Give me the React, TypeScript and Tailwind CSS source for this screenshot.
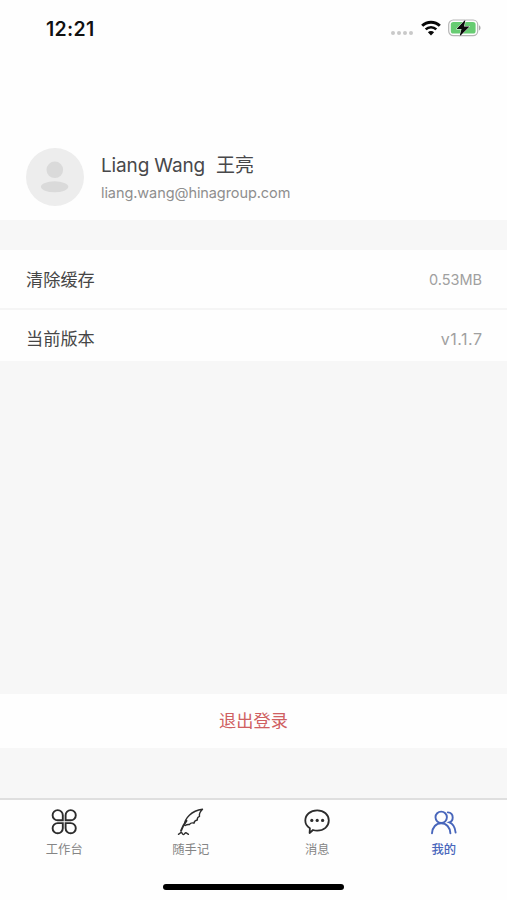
import type { ReactNode } from 'react';
import clsx from 'clsx';

interface SettingRowProps {
  label: string;
  value: string;
  className?: string;
  valueClassName?: string;
}

interface Tab {
  id: string;
  label: string;
  icon: ReactNode;
}

const tabs: Tab[] = [
  { id: 'workbench', label: '工作台', icon: <WorkbenchIcon /> },
  { id: 'notes', label: '随手记', icon: <FeatherIcon /> },
  { id: 'messages', label: '消息', icon: <MessageIcon /> },
  { id: 'mine', label: '我的', icon: <PeopleIcon /> },
];

export default function App() {
  const activeTab = 'mine';

  return (
    <div className="flex h-[900px] w-[507px] flex-col overflow-hidden bg-[#f7f7f7] font-['Inter','Noto_Sans_CJK_SC',sans-serif]">
      {/* Header */}
      <header className="h-[220px] shrink-0 bg-[#fefefe]">
        <StatusBar />
        <div className="mt-[92px] flex items-center pl-[26px]">
          <Avatar />
          <div className="ml-[17px] pt-[2px]">
            <h1 className="flex gap-[11px] text-[19px] leading-[28px] text-[#48484a]">
              <span className="tracking-[-0.15px]">Liang Wang</span>
              <span>王亮</span>
            </h1>
            <p className="text-[14.5px] leading-[25px] tracking-[-0.08px] text-[#8e8e8e]">liang.wang@hinagroup.com</p>
          </div>
        </div>
      </header>

      {/* Settings */}
      <section className="mt-[30px] shrink-0 bg-[#fefefe]">
        <SettingRow label="清除缓存" value="0.53MB" className="h-[60px] border-b-2 border-[#f5f5f5] pt-[2px]" valueClassName="text-[14.5px]" />
        <SettingRow label="当前版本" value="v1.1.7" className="h-[51px] pt-[7px]" valueClassName="text-[16px] tracking-[0.5px] -mr-[0.5px]" />
      </section>

      <button className="mt-[333px] h-[54px] shrink-0 bg-[#fefefe] text-[17.2px] text-[#cf6061]">退出登录</button>

      <nav className="mt-auto h-[102px] shrink-0 border-t-2 border-[#dfdfdf] bg-[#fefefe]">
        <div className="grid grid-cols-4 pt-[8px] pl-[1px]">
          {tabs.map((tab) => (
            <div
              key={tab.id}
              className={clsx(
                'flex flex-col items-center',
                tab.id === activeTab ? 'text-[#4866bb]' : 'text-[#2c2c2c]'
              )}
            >
              {tab.icon}
              <span
                className={clsx(
                  'mt-[5px] text-[12.3px] leading-[18px]',
                  tab.id === activeTab ? 'font-medium' : 'text-[#858585]'
                )}
              >
                {tab.label}
              </span>
            </div>
          ))}
        </div>
        <div className="mx-auto mt-[25px] h-[6px] w-[181px] rounded-full bg-black" />
      </nav>
    </div>
  );
}

function StatusBar() {
  return (
    <div className="flex h-[56px] items-center pr-[26px] pl-[46px]">
      <span className="pt-[3px] text-[19.5px] font-semibold tracking-[0.3px] text-[#111]">12:21</span>
      <div className="ml-auto flex items-center">
        <div className="mt-[10px] flex gap-[2px]">
          <i className="size-[4px] rounded-full bg-[#c9c9c9]" />
          <i className="size-[4px] rounded-full bg-[#c9c9c9]" />
          <i className="size-[4px] rounded-full bg-[#c9c9c9]" />
          <i className="size-[4px] rounded-full bg-[#c9c9c9]" />
        </div>
        <svg className="ml-[8px]" width="20" height="16" viewBox="0 0 20 16" fill="none" stroke="#080808">
          <path d="M1.2 5.8a12.6 12.6 0 0 1 17.6 0" strokeWidth="3" />
          <path d="M4.7 9.4a7.6 7.6 0 0 1 10.6 0" strokeWidth="2.6" />
          <path d="M10 15.4 6.9 12.3a4.4 4.4 0 0 1 6.2 0Z" fill="#080808" stroke="none" />
        </svg>
        <svg className="ml-[7px]" width="33" height="20" viewBox="0 0 33 20">
          <rect x="0.7" y="2" width="29" height="15.6" rx="4.6" fill="#fefefe" stroke="#b5b5b5" strokeWidth="1.2" />
          <rect x="2.8" y="4.1" width="24.8" height="11.4" rx="2.6" fill="#67cc72" />
          <path d="M31 7.2c2 .8 2 4.4 0 5.2Z" fill="#aaa" />
          <path d="M17.500 1.500 8.500 11h5l-2 7.500L21.500 8.600h-5.500Z" fill="#0b0b0b" stroke="#fefefe" strokeWidth="1" paintOrder="stroke" />
        </svg>
      </div>
    </div>
  );
}

function Avatar() {
  return (
    <svg width="58" height="58" viewBox="0 0 58 58">
      <circle cx="29" cy="29" r="29" fill="#ededed" />
      <circle cx="28.8" cy="21.8" r="8.3" fill="#dadada" />
      <ellipse cx="28.6" cy="38.8" rx="13.7" ry="5.5" fill="#dadada" />
    </svg>
  );
}

function SettingRow({ label, value, className, valueClassName }: SettingRowProps) {
  return (
    <div className={clsx('flex items-center justify-between pr-[25px] pl-[26px]', className)}>
      <span className="text-[17.2px] text-[#464646]">{label}</span>
      <span className={clsx('text-[#a0a0a0]', valueClassName)}>{value}</span>
    </div>
  );
}

function WorkbenchIcon() {
  return (
    <svg width="28" height="28" viewBox="0 0 28 28" fill="none" stroke="currentColor" strokeWidth="1.9">
      <path d="M12.8 12.3V7.2a5.1 5.1 0 1 0-5.1 5.1Z" />
      <path d="M15.600 12.300V7.200a5.100 5.100 0 1 1 5.100 5.100Z" />
      <path d="M12.800 15.100v5.100a5.100 5.100 0 1 1-5.100-5.100Z" />
      <path d="M15.600 15.100v5.100a5.100 5.100 0 1 0 5.100-5.100Z" />
    </svg>
  );
}

function FeatherIcon() {
  return (
    <svg width="28" height="28" viewBox="0 0 28 28" fill="none" stroke="currentColor" strokeWidth="1.4" strokeLinecap="round" strokeLinejoin="round">
      <path d="M7.3 17C8 10.500 14 2.800 25.500 1.300 23 3.800 21.800 5.500 22.500 8.300c-1.500.5-2.500 1.500-2.200 3.700-1.700.2-3 1-3.300 3.200-2-.7-3.400-.3-4.600 1.300-1.500-.2-2.800 0-4.200 1" />
      <path d="M4 22.800C5.300 19.300 7 15.800 9.500 12.800" strokeWidth="1.900" />
      <path d="M1.500 26.300c1.200-.2 1.700-1.800 2.700-1.800 1.100 0 1 2.100 2.100 2.100s1.500-1.900 2.600-1.900c.9 0 1.100 1.400 2.500 1.600" />
    </svg>
  );
}

function MessageIcon() {
  return (
    <svg width="28" height="28" viewBox="0 0 28 28" fill="none" stroke="currentColor" strokeWidth="1.8" strokeLinejoin="round">
      <path d="M6.900 20.200C3.900 18.500 2.300 15.900 2.300 12.600 2.300 6.700 7.400 2.400 14.200 2.400s11.600 4.300 11.600 10.200-5 10-11.600 10c-1.500 0-2.900-.2-4.200-.6L6.600 25Z" />
      <g fill="currentColor" stroke="none">
        <circle cx="8.800" cy="12.400" r="1.600" />
        <circle cx="14.200" cy="12.400" r="1.600" />
        <circle cx="19.600" cy="12.400" r="1.600" />
      </g>
    </svg>
  );
}

function PeopleIcon() {
  return (
    <svg width="28" height="28" viewBox="0 0 28 28" fill="none" stroke="currentColor" strokeWidth="1.9" strokeLinecap="round">
      <circle cx="11.2" cy="9.300" r="5.700" />
      <path d="M2 25.300c.3-6 4.100-10.100 9.200-10.100s8.900 4.100 9.200 10.100" />
      <path d="M17.800 4.400c3.100.2 4.900 2.400 4.900 5 0 2.300-1.300 4.300-3.400 5 3.500 1.300 5.800 4.700 6.300 10.100" />
    </svg>
  );
}
